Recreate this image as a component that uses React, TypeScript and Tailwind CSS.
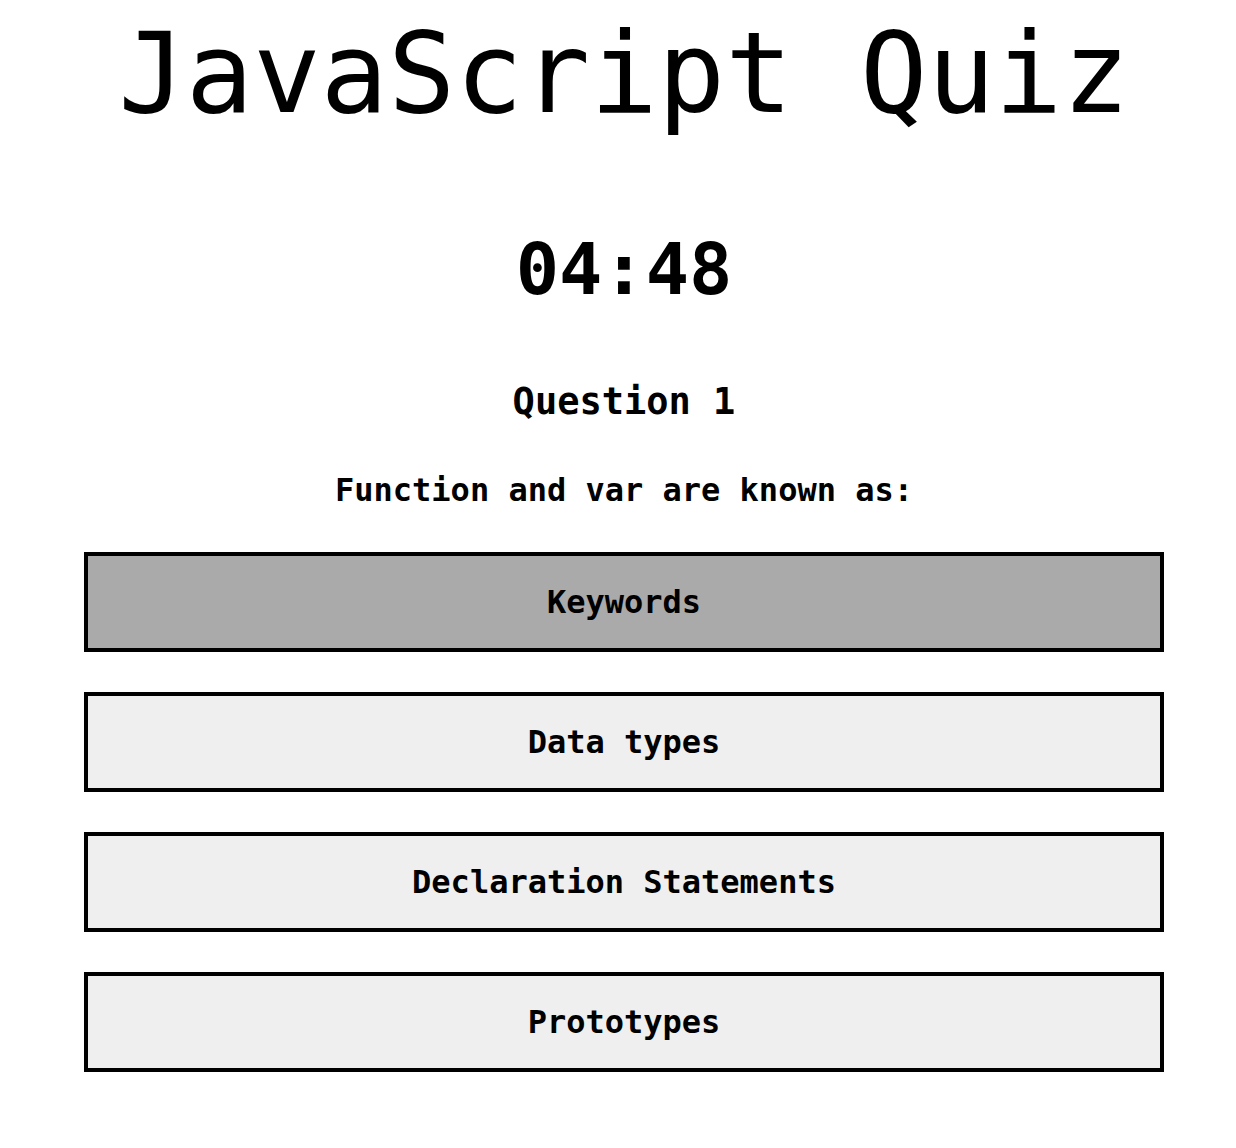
import { useState } from "react";

const answers = ["Keywords", "Data types", "Declaration Statements", "Prototypes"];

const App = () => {
  const [picked, setPicked] = useState<number>(0);

  return (
    <div
      className="flex flex-col items-center pl-3 text-black bg-white min-h-[1148px]"
      style={{ fontFamily: '"DejaVu Sans Mono", "Liberation Mono", monospace' }}
    >
      <h1 className="text-[112px] leading-none mt-[17px] font-normal">JavaScript Quiz</h1>

      <div className="text-[72px] leading-none font-bold mt-[104px]">04:48</div>

      <h2 className="text-[37px] leading-none font-bold mt-[78px]">Question 1</h2>

      <p className="text-[32px] leading-none font-bold mt-[54px]">
        Function and var are known as:
      </p>

      <div className="flex flex-col gap-10 w-[1080px] mt-[46px]">
        {answers.map((a, i) => (
          <button
            key={a}
            onClick={() => setPicked(i)}
            className={`h-[100px] border-4 border-black text-[32px] font-bold ${
              picked === i ? "bg-[#aaaaaa]" : "bg-[#efefef]"
            }`}
          >
            {a}
          </button>
        ))}
      </div>
    </div>
  );
};

export default App;
